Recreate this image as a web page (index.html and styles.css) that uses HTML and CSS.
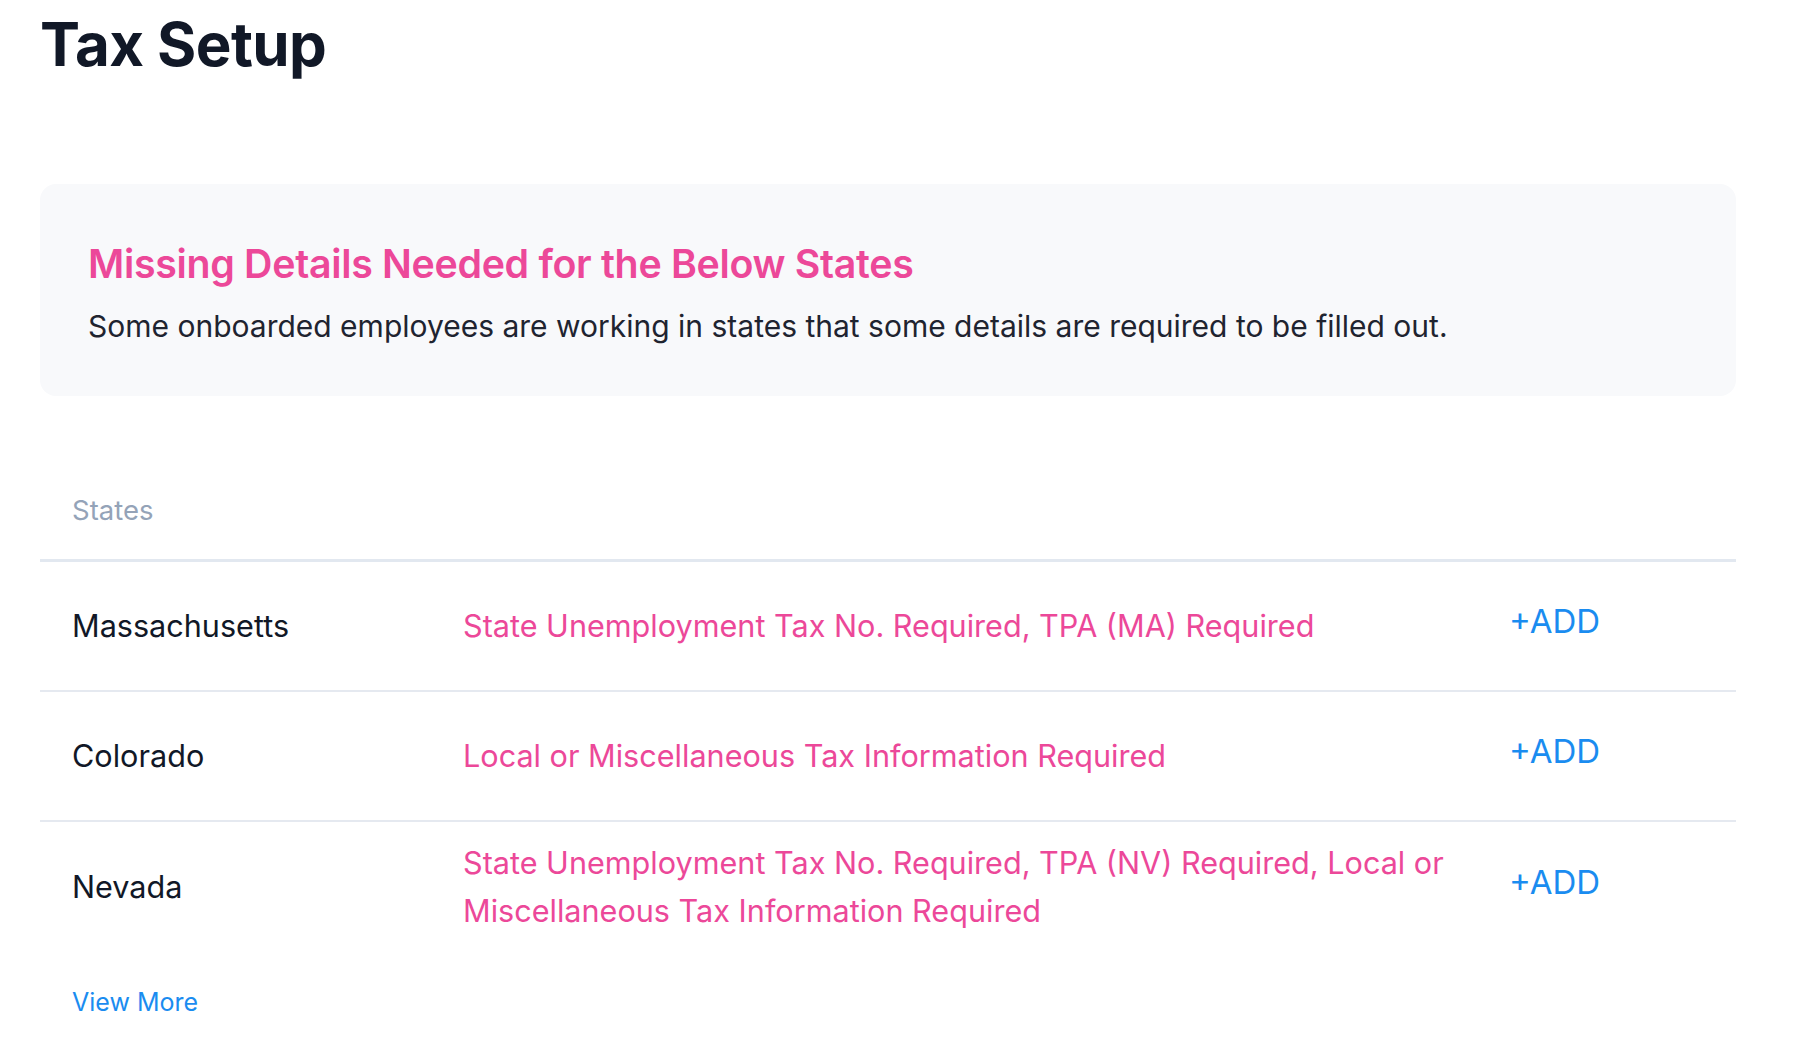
FILE: index.html
```html
<!DOCTYPE html>
<html lang="en">
<head>
<meta charset="utf-8">
<title>Tax Setup</title>
<link rel="stylesheet" href="styles.css">
</head>
<body>
<main class="page">
  <h1 class="title">Tax Setup</h1>

  <section class="notice">
    <h2 class="notice-title">Missing Details Needed for the Below States</h2>
    <p class="notice-text">Some onboarded employees are working in states that some details are required to be filled out.</p>
  </section>

  <section class="states">
    <div class="states-head">States</div>
    <div class="state-row">
      <div class="state-name">Massachusetts</div>
      <div class="state-missing">State Unemployment Tax No. Required, TPA (MA) Required</div>
      <div class="state-action"><a class="add-link" href="#">+ADD</a></div>
    </div>
    <div class="state-row">
      <div class="state-name">Colorado</div>
      <div class="state-missing">Local or Miscellaneous Tax Information Required</div>
      <div class="state-action"><a class="add-link" href="#">+ADD</a></div>
    </div>
    <div class="state-row state-row-last">
      <div class="state-name">Nevada</div>
      <div class="state-missing">State Unemployment Tax No. Required, TPA (NV) Required, Local or Miscellaneous Tax Information Required</div>
      <div class="state-action"><a class="add-link" href="#">+ADD</a></div>
    </div>
    <a class="view-more" href="#">View More</a>
  </section>
</main>
</body>
</html>
```

FILE: styles.css
```css
* {
  box-sizing: border-box;
}

html, body {
  margin: 0;
  padding: 0;
  background: #ffffff;
}

body {
  font-family: Inter, "Noto Sans", "Liberation Sans", sans-serif;
  color: #111827;
}

.page {
  padding: 8px 66px 0 40px;
}

.title {
  margin: 0;
  font-size: 60px;
  line-height: 72px;
  font-weight: 700;
  letter-spacing: -0.6px;
  color: #111827;
}

.notice {
  margin-top: 104px;
  background: #f8f9fb;
  border-radius: 16px;
  padding: 57px 48px 50px 48px;
}

.notice-title {
  margin: 0;
  font-size: 39.3px;
  line-height: 46px;
  font-weight: 600;
  color: #ec4899;
  letter-spacing: -0.3px;
}

.notice-text {
  margin: 19px 0 0 0;
  font-size: 30px;
  line-height: 40px;
  font-weight: 400;
  color: #1f2430;
}

.states {
  margin-top: 97px;
}

.states-head {
  padding: 0 32px 32px 32px;
  font-size: 27.5px;
  line-height: 34px;
  color: #94a3b8;
  border-bottom: 3px solid #e2e8f0;
}

.state-row {
  display: grid;
  grid-template-columns: 359px 1fr 195px;
  column-gap: 32px;
  align-items: center;
  min-height: 130px;
  padding: 0 32px;
  border-bottom: 2px solid #e5e9f0;
  font-size: 30.6px;
  line-height: 48px;
}

.state-row-last {
  border-bottom: none;
}

.state-name {
  color: #111827;
}

.state-missing {
  color: #ec4899;
}

.state-action {
  padding-bottom: 10px;
}

.add-link {
  color: #1a8cf0;
  text-decoration: none;
  font-size: 33px;
}

.view-more {
  display: inline-block;
  margin: 34px 0 0 32px;
  font-size: 25px;
  line-height: 32px;
  color: #1a8cf0;
  text-decoration: none;
}
```
